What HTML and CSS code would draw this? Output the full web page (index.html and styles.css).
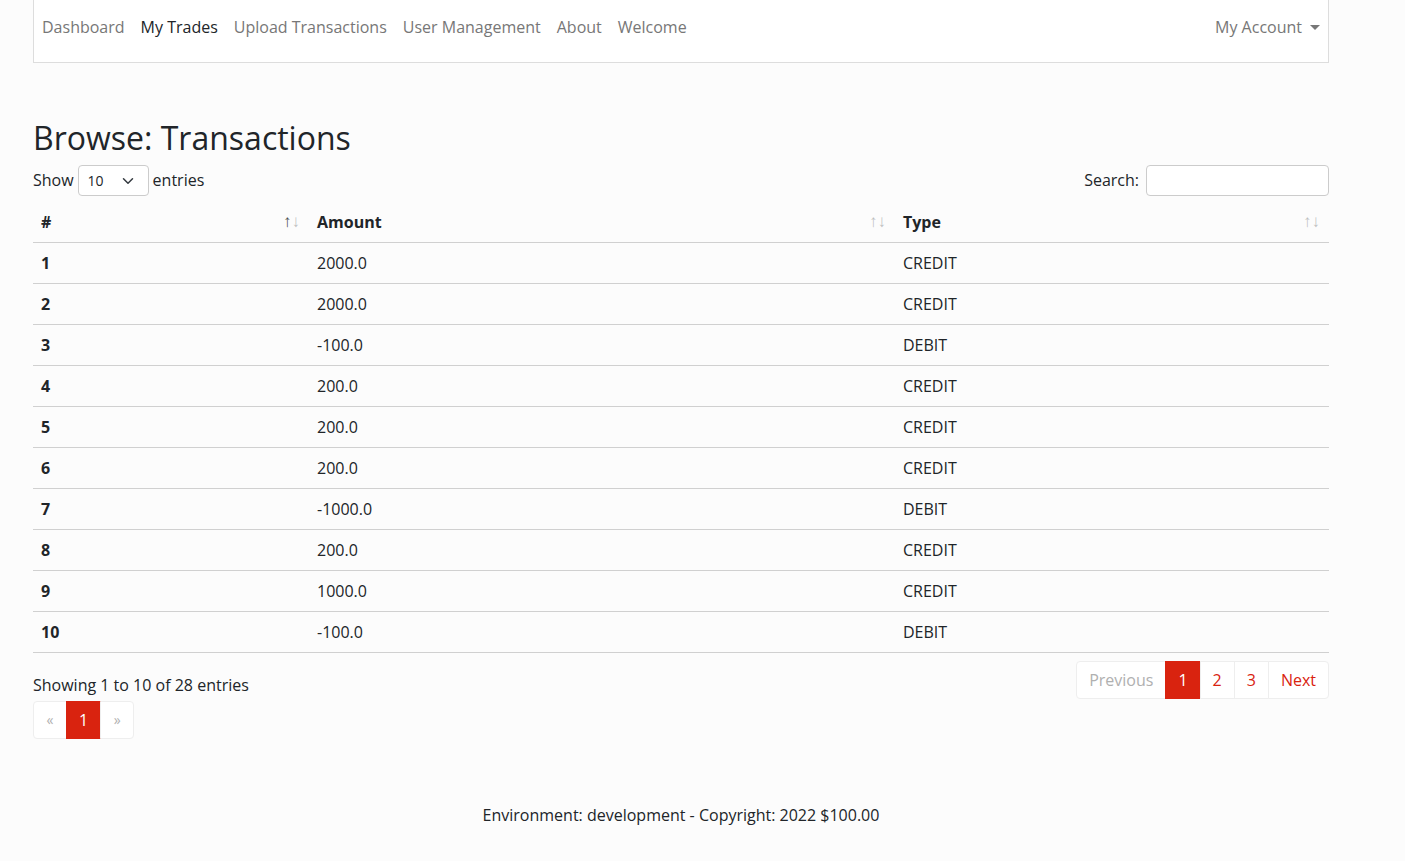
FILE: index.html
```html
<!DOCTYPE html>
<html lang="en">
<head>
<meta charset="utf-8">
<title>Browse: Transactions</title>
<link rel="stylesheet" href="styles.css">
</head>
<body>
<div class="container">
  <nav class="navbar">
    <ul class="nav-left">
      <li><a class="nav-link">Dashboard</a></li>
      <li><a class="nav-link active">My Trades</a></li>
      <li><a class="nav-link">Upload Transactions</a></li>
      <li><a class="nav-link">User Management</a></li>
      <li><a class="nav-link">About</a></li>
      <li><a class="nav-link">Welcome</a></li>
    </ul>
    <ul class="nav-right">
      <li><a class="nav-link dropdown-toggle">My Account</a></li>
    </ul>
  </nav>

  <main class="main">
    <h2 class="title">Browse: Transactions</h2>
    <div class="controls">
      <label class="length">Show
        <span class="select">10
          <svg class="chev" width="12" height="12" viewBox="0 0 16 16"><path d="M2 5l6 6 6-6" fill="none" stroke="#343a40" stroke-width="2" stroke-linecap="round" stroke-linejoin="round"/></svg>
        </span>
        entries</label>
      <label class="search">Search: <span class="input"></span></label>
    </div>

    <table class="table">
      <colgroup>
        <col class="c1"><col class="c2"><col class="c3">
      </colgroup>
      <thead>
        <tr>
          <th><div class="th"><span>#</span><span class="sort"><span class="up on">↑</span><span class="down">↓</span></span></div></th>
          <th><div class="th"><span>Amount</span><span class="sort"><span class="up">↑</span><span class="down">↓</span></span></div></th>
          <th><div class="th"><span>Type</span><span class="sort"><span class="up">↑</span><span class="down">↓</span></span></div></th>
        </tr>
      </thead>
      <tbody>
        <tr><th>1</th><td>2000.0</td><td>CREDIT</td></tr>
        <tr><th>2</th><td>2000.0</td><td>CREDIT</td></tr>
        <tr><th>3</th><td>-100.0</td><td>DEBIT</td></tr>
        <tr><th>4</th><td>200.0</td><td>CREDIT</td></tr>
        <tr><th>5</th><td>200.0</td><td>CREDIT</td></tr>
        <tr><th>6</th><td>200.0</td><td>CREDIT</td></tr>
        <tr><th>7</th><td>-1000.0</td><td>DEBIT</td></tr>
        <tr><th>8</th><td>200.0</td><td>CREDIT</td></tr>
        <tr><th>9</th><td>1000.0</td><td>CREDIT</td></tr>
        <tr><th>10</th><td>-100.0</td><td>DEBIT</td></tr>
      </tbody>
    </table>

    <div class="bottom">
      <div class="bottom-left">
        <div class="info">Showing 1 to 10 of 28 entries</div>
        <ul class="pagination small-pag">
          <li class="page disabled arrow">«</li>
          <li class="page active">1</li>
          <li class="page disabled arrow">»</li>
        </ul>
      </div>
      <ul class="pagination">
        <li class="page disabled">Previous</li>
        <li class="page active">1</li>
        <li class="page">2</li>
        <li class="page">3</li>
        <li class="page">Next</li>
      </ul>
    </div>
  </main>

  <footer class="footer">Environment: development - Copyright: 2022 $100.00</footer>
</div>
</body>
</html>
```

FILE: styles.css
```css
* { box-sizing: border-box; }
html, body { margin: 0; padding: 0; }
body {
  background: #fcfcfc;
  color: #212529;
  font-family: "Open Sans", "Noto Sans", sans-serif;
  font-size: 16px;
  line-height: 24px;
}
.container {
  width: 1296px;
  margin-left: 33px;
}
.navbar {
  display: flex;
  justify-content: space-between;
  align-items: center;
  background: #fff;
  border: 1px solid #ddd;
  border-top: none;
  height: 63px;
  padding: 7px 0 15px 0;
}
.nav-left, .nav-right {
  display: flex;
  list-style: none;
  margin: 0;
  padding: 0;
}
.nav-link {
  display: block;
  padding: 8px 8px;
  color: #777;
  text-decoration: none;
}
.nav-link.active { color: #212529; }
.dropdown-toggle::after {
  content: "";
  display: inline-block;
  margin-left: 8px;
  vertical-align: 3px;
  border-top: 5px solid #777;
  border-left: 5px solid transparent;
  border-right: 5px solid transparent;
}
.main { padding-top: 56px; }
.title {
  font-size: 32px;
  line-height: 38px;
  font-weight: 500;
  margin: 0 0 8px 0;
  color: #212529;
}
.controls {
  display: flex;
  justify-content: space-between;
  align-items: center;
  height: 31px;
  line-height: 22px;
}
.length, .search {
  display: flex;
  align-items: center;
  padding-bottom: 2px;
}
.select {
  display: inline-flex;
  align-items: center;
  justify-content: space-between;
  width: 71px;
  height: 31px;
  margin: 2px 4px 0 4px;
  padding: 0 14px 0 9px;
  font-size: 14px;
  border: 1px solid #ccc;
  border-radius: 4px;
  background: #fff;
}
.input {
  display: inline-block;
  width: 183px;
  height: 31px;
  margin: 2px 0 0 7px;
  border: 1px solid #ccc;
  border-radius: 4px;
  background: #fff;
}
.table {
  width: 100%;
  border-collapse: collapse;
  margin-top: 5px;
  table-layout: fixed;
}
.c1 { width: 276px; }
.c2 { width: 586px; }
.c3 { width: 434px; }
.table th, .table td {
  text-align: left;
  padding: 8px 8px;
  border-bottom: 1px solid #d0d0d0;
  height: 41px;
}
.table thead th { font-weight: 700; padding: 9px 8px 7px 8px; }
.table tbody th { font-weight: 700; }
.th {
  display: flex;
  justify-content: space-between;
  align-items: center;
  height: 24px;
}
.sort {
  display: flex;
  font-size: 17px;
  line-height: 24px;
  color: #212529;
  margin-right: 1px;
  font-family: "Liberation Sans", sans-serif;
  font-weight: 400;
}
.sort span { opacity: 0.28; }
.sort .on { opacity: 0.8; }
.bottom {
  display: flex;
  justify-content: space-between;
  align-items: flex-start;
  padding-top: 8px;
}
.info {
  padding-top: 12px;
  margin-bottom: 4px;
}
.pagination {
  display: flex;
  list-style: none;
  margin: 0;
  padding: 0;
}
.page {
  padding: 6px 12px;
  border: 1px solid #eee;
  margin-left: -1px;
  background: #fff;
  color: #d9230f;
  line-height: 24px;
}
.page:first-child { border-radius: 4px 0 0 4px; margin-left: 0; }
.page:last-child { border-radius: 0 4px 4px 0; }
.page.disabled { color: #b0b0b0; }
.page.active { background: #d9230f; border-color: #d9230f; color: #fff; }
.small-pag .page.arrow { width: 34px; text-align: center; padding: 6px 0; font-size: 14px; }
.footer {
  text-align: center;
  margin-top: 64px;
}
```
